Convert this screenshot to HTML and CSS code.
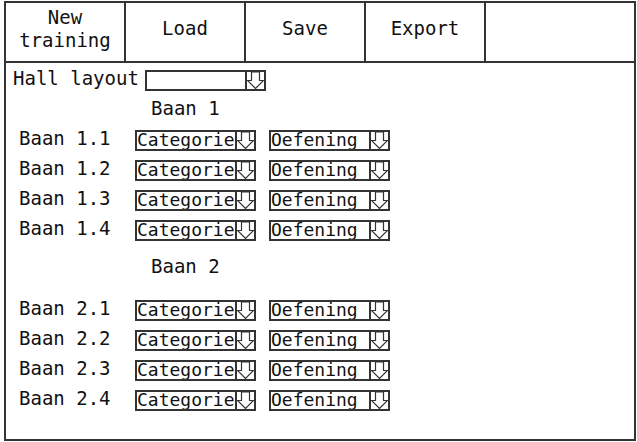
FILE: index.html
```html
<!DOCTYPE html>
<html>
<head>
<meta charset="utf-8">
<link rel="stylesheet" href="styles.css">
</head>
<body>
<div class="frame">
  <div class="toolbar">
    <div class="tbtn">New<br>training</div>
    <div class="tbtn">Load</div>
    <div class="tbtn">Save</div>
    <div class="tbtn">Export</div>
  </div>
  <div class="content">
    <div class="hall">
      <span class="hall-label">Hall layout</span>
      <span class="select hall-select"><span class="sel-text"></span><span class="arrow"><svg width="17" height="17" viewBox="0 0 17 17"><polygon points="4.5,0 4.5,8.5 0.5,8.5 8.5,16.5 16.5,8.5 12.5,8.5 12.5,0" fill="none" stroke="#333" stroke-width="1.2"/></svg></span></span>
    </div>
    <div class="heading h1">Baan 1</div>
    <div class="rows">
      <div class="row"><span class="lbl">Baan 1.1</span><span class="select"><span class="sel-text">Categorie</span><span class="arrow"><svg width="17" height="17" viewBox="0 0 17 17"><polygon points="4.5,0 4.5,8.5 0.5,8.5 8.5,16.5 16.5,8.5 12.5,8.5 12.5,0" fill="none" stroke="#333" stroke-width="1.2"/></svg></span></span><span class="select"><span class="sel-text">Oefening</span><span class="arrow"><svg width="17" height="17" viewBox="0 0 17 17"><polygon points="4.5,0 4.5,8.5 0.5,8.5 8.5,16.5 16.5,8.5 12.5,8.5 12.5,0" fill="none" stroke="#333" stroke-width="1.2"/></svg></span></span></div>
      <div class="row"><span class="lbl">Baan 1.2</span><span class="select"><span class="sel-text">Categorie</span><span class="arrow"><svg width="17" height="17" viewBox="0 0 17 17"><polygon points="4.5,0 4.5,8.5 0.5,8.5 8.5,16.5 16.5,8.5 12.5,8.5 12.5,0" fill="none" stroke="#333" stroke-width="1.2"/></svg></span></span><span class="select"><span class="sel-text">Oefening</span><span class="arrow"><svg width="17" height="17" viewBox="0 0 17 17"><polygon points="4.5,0 4.5,8.5 0.5,8.5 8.5,16.5 16.5,8.5 12.5,8.5 12.5,0" fill="none" stroke="#333" stroke-width="1.2"/></svg></span></span></div>
      <div class="row"><span class="lbl">Baan 1.3</span><span class="select"><span class="sel-text">Categorie</span><span class="arrow"><svg width="17" height="17" viewBox="0 0 17 17"><polygon points="4.5,0 4.5,8.5 0.5,8.5 8.5,16.5 16.5,8.5 12.5,8.5 12.5,0" fill="none" stroke="#333" stroke-width="1.2"/></svg></span></span><span class="select"><span class="sel-text">Oefening</span><span class="arrow"><svg width="17" height="17" viewBox="0 0 17 17"><polygon points="4.5,0 4.5,8.5 0.5,8.5 8.5,16.5 16.5,8.5 12.5,8.5 12.5,0" fill="none" stroke="#333" stroke-width="1.2"/></svg></span></span></div>
      <div class="row"><span class="lbl">Baan 1.4</span><span class="select"><span class="sel-text">Categorie</span><span class="arrow"><svg width="17" height="17" viewBox="0 0 17 17"><polygon points="4.5,0 4.5,8.5 0.5,8.5 8.5,16.5 16.5,8.5 12.5,8.5 12.5,0" fill="none" stroke="#333" stroke-width="1.2"/></svg></span></span><span class="select"><span class="sel-text">Oefening</span><span class="arrow"><svg width="17" height="17" viewBox="0 0 17 17"><polygon points="4.5,0 4.5,8.5 0.5,8.5 8.5,16.5 16.5,8.5 12.5,8.5 12.5,0" fill="none" stroke="#333" stroke-width="1.2"/></svg></span></span></div>
    </div>
    <div class="heading h2">Baan 2</div>
    <div class="rows">
      <div class="row"><span class="lbl">Baan 2.1</span><span class="select"><span class="sel-text">Categorie</span><span class="arrow"><svg width="17" height="17" viewBox="0 0 17 17"><polygon points="4.5,0 4.5,8.5 0.5,8.5 8.5,16.5 16.5,8.5 12.5,8.5 12.5,0" fill="none" stroke="#333" stroke-width="1.2"/></svg></span></span><span class="select"><span class="sel-text">Oefening</span><span class="arrow"><svg width="17" height="17" viewBox="0 0 17 17"><polygon points="4.5,0 4.5,8.5 0.5,8.5 8.5,16.5 16.5,8.5 12.5,8.5 12.5,0" fill="none" stroke="#333" stroke-width="1.2"/></svg></span></span></div>
      <div class="row"><span class="lbl">Baan 2.2</span><span class="select"><span class="sel-text">Categorie</span><span class="arrow"><svg width="17" height="17" viewBox="0 0 17 17"><polygon points="4.5,0 4.5,8.5 0.5,8.5 8.5,16.5 16.5,8.5 12.5,8.5 12.5,0" fill="none" stroke="#333" stroke-width="1.2"/></svg></span></span><span class="select"><span class="sel-text">Oefening</span><span class="arrow"><svg width="17" height="17" viewBox="0 0 17 17"><polygon points="4.5,0 4.5,8.5 0.5,8.5 8.5,16.5 16.5,8.5 12.5,8.5 12.5,0" fill="none" stroke="#333" stroke-width="1.2"/></svg></span></span></div>
      <div class="row"><span class="lbl">Baan 2.3</span><span class="select"><span class="sel-text">Categorie</span><span class="arrow"><svg width="17" height="17" viewBox="0 0 17 17"><polygon points="4.5,0 4.5,8.5 0.5,8.5 8.5,16.5 16.5,8.5 12.5,8.5 12.5,0" fill="none" stroke="#333" stroke-width="1.2"/></svg></span></span><span class="select"><span class="sel-text">Oefening</span><span class="arrow"><svg width="17" height="17" viewBox="0 0 17 17"><polygon points="4.5,0 4.5,8.5 0.5,8.5 8.5,16.5 16.5,8.5 12.5,8.5 12.5,0" fill="none" stroke="#333" stroke-width="1.2"/></svg></span></span></div>
      <div class="row"><span class="lbl">Baan 2.4</span><span class="select"><span class="sel-text">Categorie</span><span class="arrow"><svg width="17" height="17" viewBox="0 0 17 17"><polygon points="4.5,0 4.5,8.5 0.5,8.5 8.5,16.5 16.5,8.5 12.5,8.5 12.5,0" fill="none" stroke="#333" stroke-width="1.2"/></svg></span></span><span class="select"><span class="sel-text">Oefening</span><span class="arrow"><svg width="17" height="17" viewBox="0 0 17 17"><polygon points="4.5,0 4.5,8.5 0.5,8.5 8.5,16.5 16.5,8.5 12.5,8.5 12.5,0" fill="none" stroke="#333" stroke-width="1.2"/></svg></span></span></div>
    </div>
  </div>
</div>
</body>
</html>
```
FILE: styles.css
```css
* { box-sizing: border-box; }
html, body { margin: 0; padding: 0; background: #fff; }
body {
  font-family: "DejaVu Sans Mono", monospace;
  color: #111;
}
.frame {
  margin: 1px 0 0 4px;
  width: 632px;
  height: 440px;
  border: 2px solid #333;
}
.toolbar {
  display: flex;
  height: 60px;
  border-bottom: 2px solid #333;
}
.tbtn {
  width: 120px;
  border-right: 2px solid #333;
  display: flex;
  align-items: center;
  justify-content: center;
  text-align: center;
  font-size: 19px;
  line-height: 23px;
  padding-bottom: 7px;
}
.content {
  padding: 6px 0 0 7px;
  font-size: 19px;
}
.hall {
  display: flex;
  align-items: center;
  height: 23px;
}
.hall-label {
  margin-right: 6px;
  line-height: 17px;
  margin-bottom: 4px;
}
.select {
  display: flex;
  height: 21px;
}
.sel-text {
  width: 102px;
  border: 2px solid #333;
  font-size: 18px;
  line-height: 16px;
  overflow: hidden;
  white-space: nowrap;
}
.arrow {
  width: 21px;
  height: 21px;
  margin-left: -2px;
  border: 2px solid #333;
  display: flex;
  align-items: flex-start;
  justify-content: center;
}
.arrow svg { display: block; }
.heading {
  padding-left: 138px;
}
.h1 { height: 33px; line-height: 32px; }
.h2 { height: 50px; line-height: 43px; }
.rows { padding-left: 6px; }
.row {
  display: flex;
  align-items: center;
  height: 30px;
}
.lbl {
  width: 116px;
  line-height: 17px;
  margin-bottom: 4px;
}
.row .select + .select { margin-left: 13px; }
```
